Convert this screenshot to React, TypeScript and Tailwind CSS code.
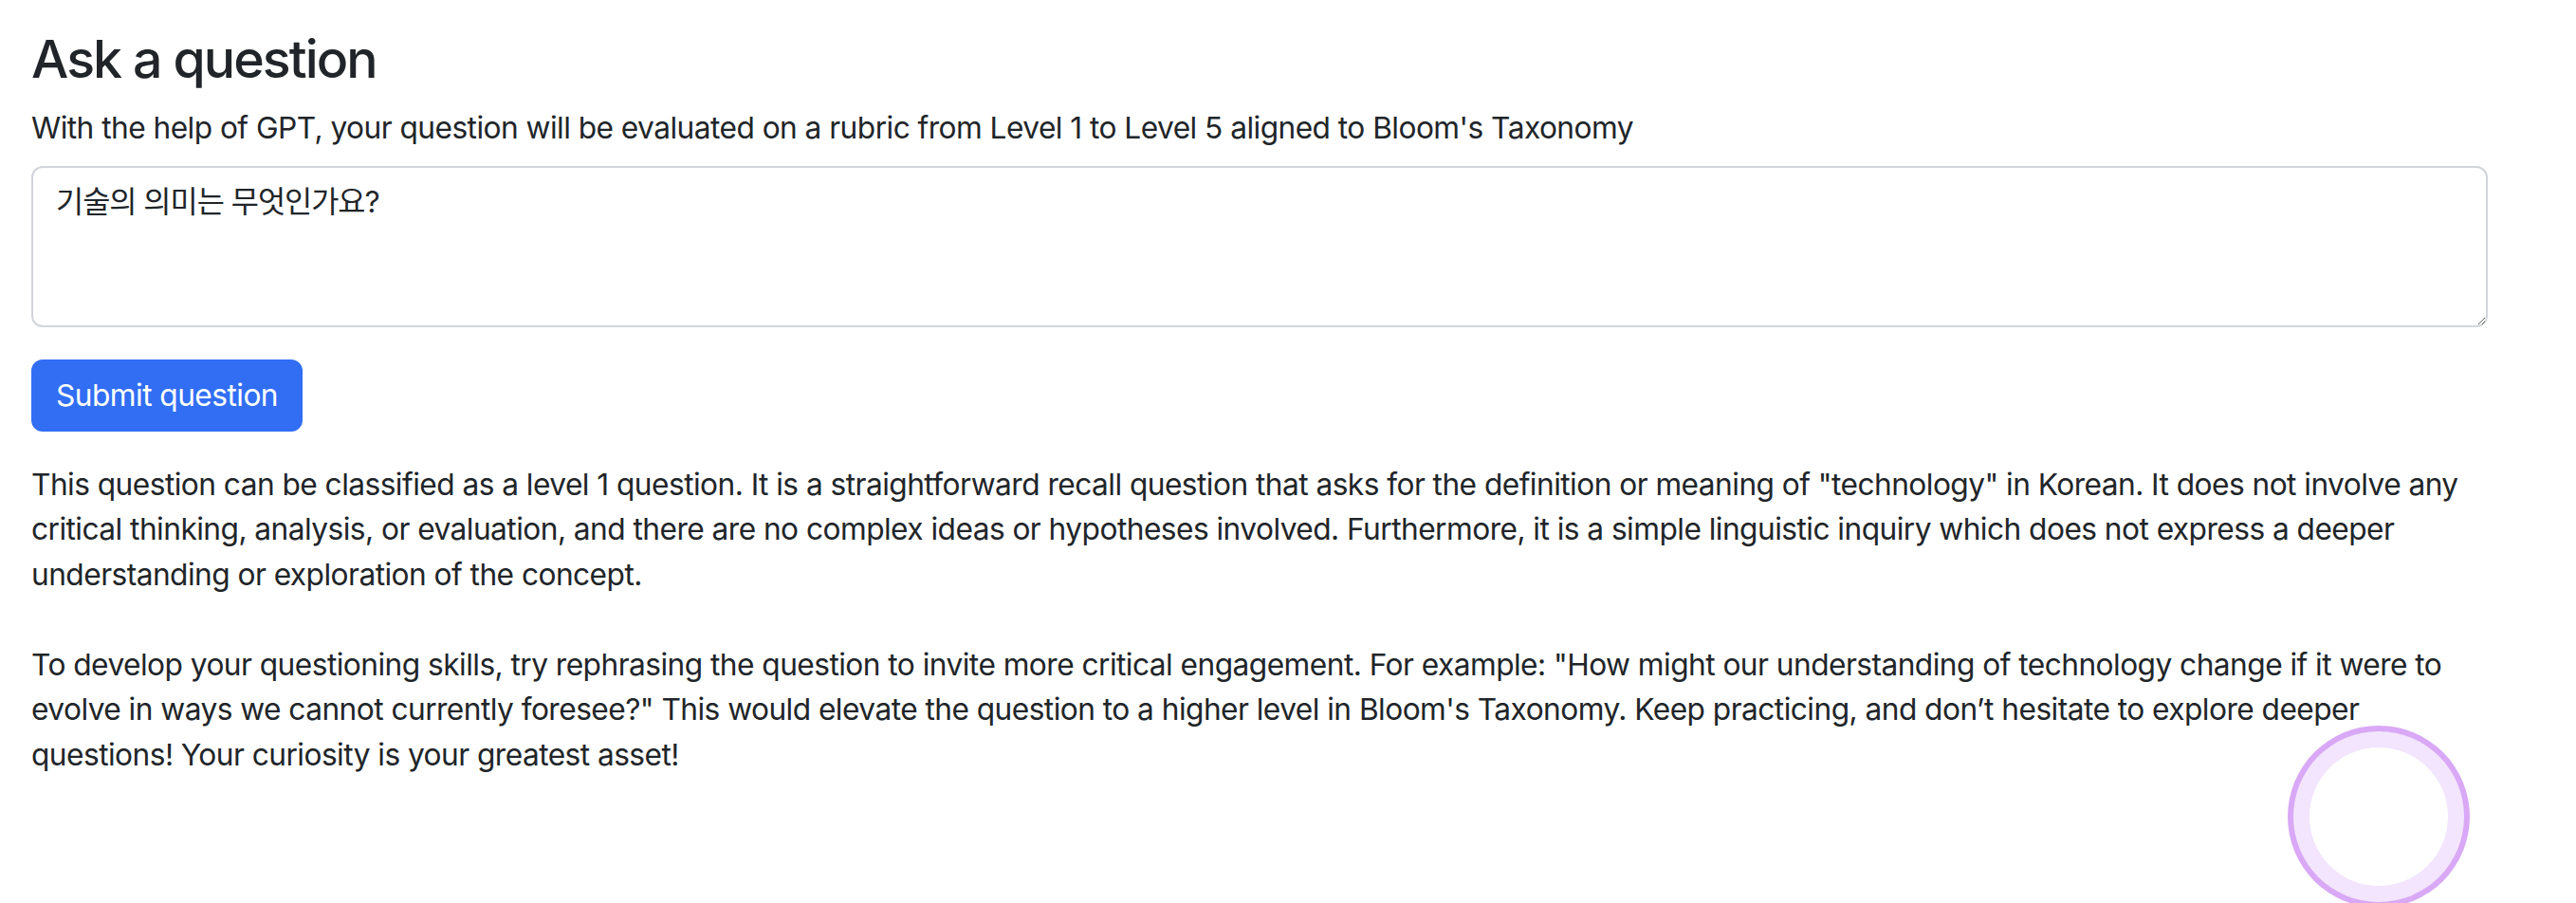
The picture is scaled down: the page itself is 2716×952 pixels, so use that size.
import React from 'react';

const feedback = `This question can be classified as a level 1 question. It is a straightforward recall question that asks for the definition or meaning of "technology" in Korean. It does not involve any critical thinking, analysis, or evaluation, and there are no complex ideas or hypotheses involved. Furthermore, it is a simple linguistic inquiry which does not express a deeper understanding or exploration of the concept.

To develop your questioning skills, try rephrasing the question to invite more critical engagement. For example: "How might our understanding of technology change if it were to
evolve in ways we cannot currently foresee?" This would elevate the question to a higher level in Bloom's Taxonomy. Keep practicing, and don’t hesitate to explore deeper
questions! Your curiosity is your greatest asset!`;

export default function App() {
  return (
    <div className="relative min-h-screen bg-white pl-[33px] pr-[33px] pt-[29px] text-[#212529] tracking-[-0.55px] font-['Inter','Noto_Sans_CJK_KR',sans-serif]">
      <h3 className="text-[55.4px] leading-[1.2] font-medium tracking-[-1.9px] mb-[16px]">Ask a question</h3>
      <p className="text-[31.7px] leading-[47.5px] mb-[16px]">
        With the help of GPT, your question will be evaluated on a rubric from Level 1 to Level 5 aligned to Bloom's Taxonomy
      </p>

      <textarea
        defaultValue="기술의 의미는 무엇인가요?"
        className="block w-[2590px] h-[170px] border-2 border-[#d1d5da] rounded-[12px] px-[24px] py-[12px] text-[31.7px] leading-[47.5px] tracking-[-1px] text-[#212529] outline-none font-['Inter','Noto_Sans_CJK_KR',sans-serif]"
      />

      <button className="mt-[34px] h-[76px] px-[24px] rounded-[12px] border-2 border-[#316ef4] bg-[#316ef4] text-white text-[31.7px] leading-[47.5px]">
        Submit question
      </button>

      <div className="mt-[32px] whitespace-pre-line text-[31.7px] leading-[47.5px]">{feedback}</div>

      {/* floating assistant bubble */}
      <div className="fixed right-[112px] bottom-[-5px] w-[192px] h-[192px] rounded-full bg-[#d9a8f6] p-[6px]">
        <div className="w-full h-full rounded-full bg-[#f3e5fd] p-[17px]">
          <div className="w-full h-full rounded-full bg-white" />
        </div>
      </div>
    </div>
  );
}
